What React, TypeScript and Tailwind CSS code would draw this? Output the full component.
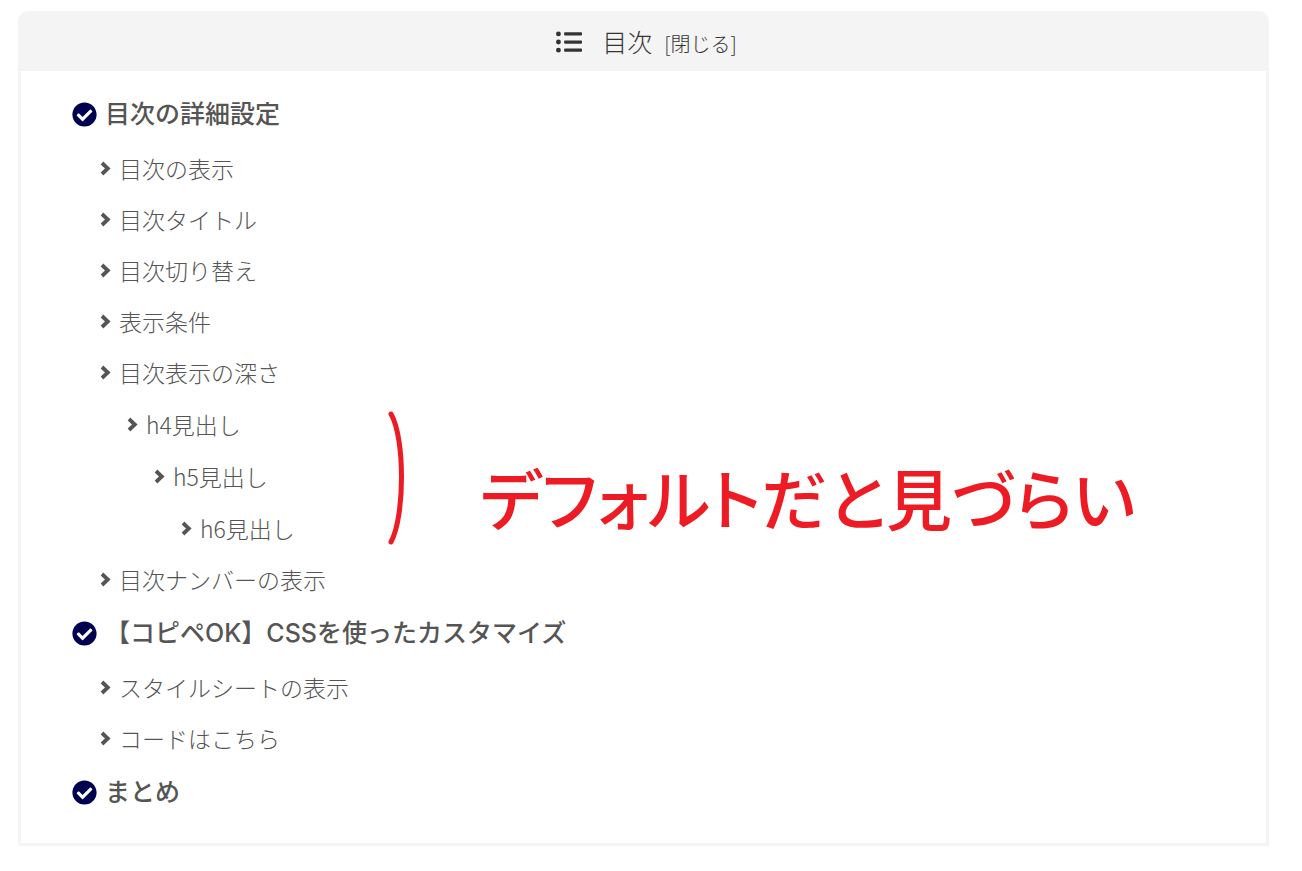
import { useState } from "react";
import { FaCheckCircle, FaListUl } from "react-icons/fa";

type Entry = {
  label: string;
  children?: Entry[];
};

const entries: Entry[] = [
  {
    label: "目次の詳細設定",
    children: [
      { label: "目次の表示" },
      { label: "目次タイトル" },
      { label: "目次切り替え" },
      { label: "表示条件" },
      {
        label: "目次表示の深さ",
        children: [
          {
            label: "h4見出し",
            children: [{ label: "h5見出し", children: [{ label: "h6見出し" }] }],
          },
        ],
      },
      { label: "目次ナンバーの表示" },
    ],
  },
  {
    label: "【コピペOK】CSSを使ったカスタマイズ",
    children: [{ label: "スタイルシートの表示" }, { label: "コードはこちら" }],
  },
  { label: "まとめ" },
];

function Chevron() {
  return (
    <svg className="h-[15px] w-[11px]" viewBox="0 0 11 15" fill="none" stroke="currentColor" strokeWidth="3.8" aria-hidden="true">
      <path d="M2 2L7.8 7.5L2 13" />
    </svg>
  );
}

function SubList({ items, nested }: { items: Entry[]; nested?: boolean }) {
  return (
    <ul className={nested ? "pl-[27px] pt-px" : "pl-7"}>
      {items.map((item) => (
        <li key={item.label}>
          <a href="#" className="flex h-[51px] items-center gap-2 text-[23px] font-light">
            <Chevron />
            {item.label}
          </a>
          {item.children && <SubList items={item.children} nested />}
        </li>
      ))}
    </ul>
  );
}

export default function App() {
  const [open, setOpen] = useState(true);

  return (
    <div className="bg-white pt-[11px] pr-[33px] pb-6 pl-[18px] font-['Noto_Sans_CJK_JP',sans-serif]">
      <nav aria-label="目次" className="relative rounded-t-[10px] border-[3px] border-[#f4f4f4] text-[#555]">
        {/* Title bar */}
        <div className="flex h-[57px] items-center justify-center bg-[#f4f4f4] pb-[2px] pl-[6px] font-light text-[#333]">
          <FaListUl className="mr-5 size-[26px]" />
          <div className="flex items-baseline gap-3">
            <h2 className="text-[25px]">目次</h2>
            <button type="button" onClick={() => setOpen(!open)} className="text-[20px]">
              [{open ? "閉じる" : "開く"}]
            </button>
          </div>
        </div>

        {open && (
          <div className="pt-[15px] pr-6 pb-[22px] pl-[51px]">
            <ul>
              {entries.map((entry) => (
                <li key={entry.label}>
                  <a
                    href="#"
                    className="flex h-[57px] items-center gap-2 font-[Inter,'Noto_Sans_CJK_JP',sans-serif] text-[25px] font-medium"
                  >
                    <FaCheckCircle className="size-[25px] text-[#000050]" />
                    {entry.label}
                  </a>
                  {entry.children && <SubList items={entry.children} />}
                </li>
              ))}
            </ul>
          </div>
        )}

        {/* Red pen note over the list */}
        {open && (
          <div className="pointer-events-none absolute top-[394px] left-[366px] flex items-center gap-[73px] text-[#ed1c24]">
            <svg width="20" height="140" viewBox="0 0 20 140" fill="none" stroke="currentColor" strokeLinecap="round">
              <path d="M4 6C18 30 18 108 4 134" strokeWidth="5" />
            </svg>
            <p className="pt-9 text-[66px] leading-none font-medium whitespace-nowrap [font-feature-settings:'palt']">
              デフォルトだと見づらい
            </p>
          </div>
        )}
      </nav>
    </div>
  );
}
